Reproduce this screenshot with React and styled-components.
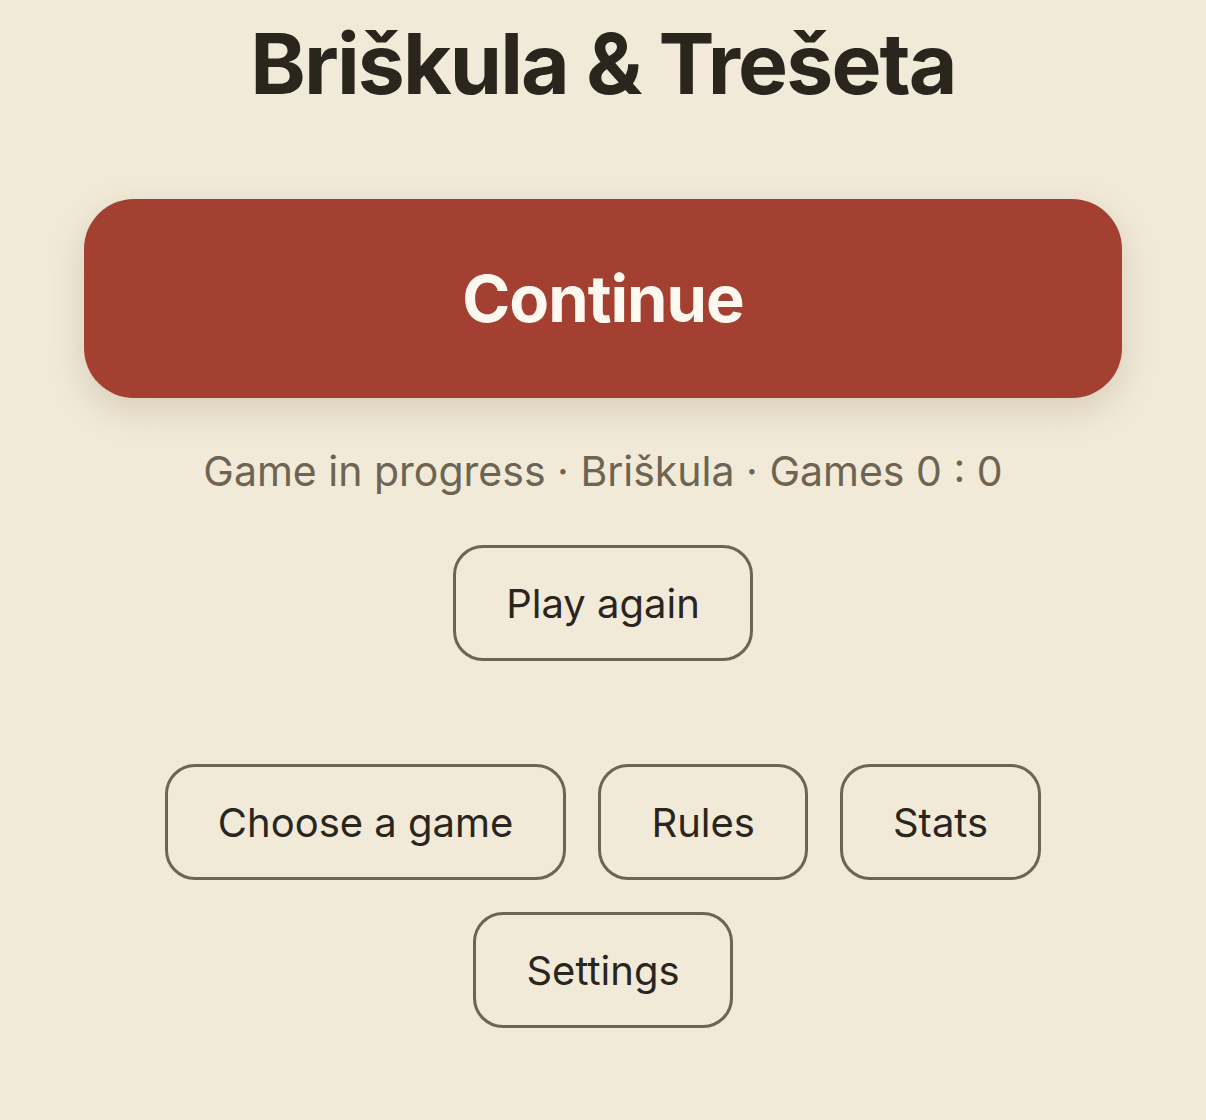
import React from 'react';
import styled, { createGlobalStyle } from 'styled-components';

const GlobalStyle = createGlobalStyle`
  html, body {
    margin: 0;
    padding: 0;
    background: #f2ead9;
  }
  body {
    font-family: Inter, "Noto Sans", "Liberation Sans", sans-serif;
    color: #2a251d;
  }
`;

const Page = styled.main`
  min-height: 1120px;
  display: flex;
  flex-direction: column;
  align-items: center;
  padding: 13px 84px 0;
  box-sizing: border-box;
`;

const Title = styled.h1`
  margin: 0;
  font-size: 84px;
  line-height: 101px;
  font-weight: 700;
  letter-spacing: -1.9px;
  color: #2a251d;
`;

const PrimaryButton = styled.button`
  margin-top: 85px;
  width: 100%;
  height: 199px;
  border: none;
  border-radius: 50px;
  background: #a34032;
  color: #fdf9f1;
  font-family: inherit;
  font-size: 65px;
  font-weight: 700;
  letter-spacing: -1px;
  box-shadow: 0 12px 36px rgba(90, 70, 40, 0.18);
  cursor: pointer;
`;

const Status = styled.p`
  margin: 48px 0 0;
  font-size: 41px;
  line-height: 50px;
  color: #6d6451;
`;

const Actions = styled.div`
  display: flex;
  flex-wrap: wrap;
  justify-content: center;
  gap: 32px;
  margin-top: ${(p) => p.$top}px;
  max-width: 900px;
`;

const OutlineButton = styled.button`
  height: 116px;
  padding: 0 50px;
  border: 3px solid #6e6450;
  border-radius: 30px;
  background: transparent;
  color: #2a251d;
  font-family: inherit;
  font-size: 40px;
  font-weight: 400;
  cursor: pointer;
`;

export default function App() {
  return (
    <>
      <GlobalStyle />
      <Page>
        <Title>Briškula &amp; Trešeta</Title>
        <PrimaryButton>Continue</PrimaryButton>
        <Status>Game in progress · Briškula · Games 0 : 0</Status>
        <Actions $top={49}>
          <OutlineButton>Play again</OutlineButton>
        </Actions>
        <Actions $top={103}>
          <OutlineButton>Choose a game</OutlineButton>
          <OutlineButton>Rules</OutlineButton>
          <OutlineButton>Stats</OutlineButton>
          <OutlineButton>Settings</OutlineButton>
        </Actions>
      </Page>
    </>
  );
}
